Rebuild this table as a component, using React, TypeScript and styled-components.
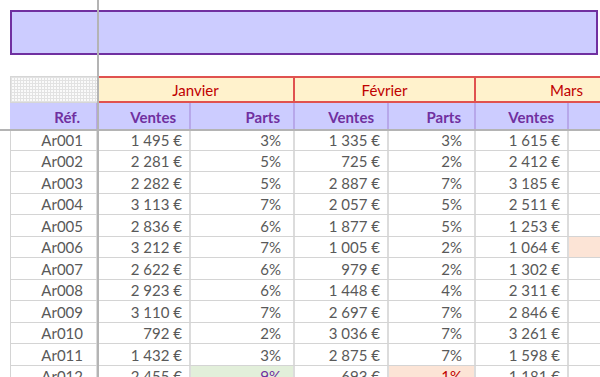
import styled, { createGlobalStyle } from "styled-components";

type Tone = "plain" | "good" | "bad" | "warn";

type Row = {
  ref: string;
  cells: [string, string, string, string, string, string];
  tones?: Partial<Record<number, Tone>>;
};

const COLS = "88px 93px 104px 94px 87px 93px 90px";

const rows: Row[] = [
  { ref: "Ar001", cells: ["1 495 €", "3%", "1 335 €", "3%", "1 615 €", ""] },
  { ref: "Ar002", cells: ["2 281 €", "5%", "725 €", "2%", "2 412 €", ""] },
  { ref: "Ar003", cells: ["2 282 €", "5%", "2 887 €", "7%", "3 185 €", ""] },
  { ref: "Ar004", cells: ["3 113 €", "7%", "2 057 €", "5%", "2 511 €", ""] },
  { ref: "Ar005", cells: ["2 836 €", "6%", "1 877 €", "5%", "1 253 €", ""] },
  {
    ref: "Ar006",
    cells: ["3 212 €", "7%", "1 005 €", "2%", "1 064 €", ""],
    tones: { 5: "warn" },
  },
  { ref: "Ar007", cells: ["2 622 €", "6%", "979 €", "2%", "1 302 €", ""] },
  { ref: "Ar008", cells: ["2 923 €", "6%", "1 448 €", "4%", "2 311 €", ""] },
  { ref: "Ar009", cells: ["3 110 €", "7%", "2 697 €", "7%", "2 846 €", ""] },
  { ref: "Ar010", cells: ["792 €", "2%", "3 036 €", "7%", "3 261 €", ""] },
  { ref: "Ar011", cells: ["1 432 €", "3%", "2 875 €", "7%", "1 598 €", ""] },
  {
    ref: "Ar012",
    cells: ["2 455 €", "9%", "693 €", "1%", "1 181 €", ""],
    tones: { 1: "good", 3: "bad" },
  },
];

// espace insécable comme dans Excel
const nb = (s: string) => s.replace(/ /g, "\u00a0");

const App = () => {
  return (
    <>
      <GlobalStyle />
      <Sheet>
        <TitleBar />
        <Table>
          <MonthRow>
            <CornerCell />
            <MonthCell>Janvier</MonthCell>
            <MonthCell>Février</MonthCell>
            <MonthCell>Mars</MonthCell>
          </MonthRow>

          <HeadRow>
            <HeadCell $pad={16}>Réf.</HeadCell>
            <HeadCell>Ventes</HeadCell>
            <HeadCell>Parts</HeadCell>
            <HeadCell>Ventes</HeadCell>
            <HeadCell>Parts</HeadCell>
            <HeadCell>Ventes</HeadCell>
            <HeadCell />
          </HeadRow>

          {rows.map((row) => (
            <DataRow key={row.ref}>
              <Cell $pad={13}>{row.ref}</Cell>
              {row.cells.map((value, i) => (
                <Cell
                  key={i}
                  $pad={i % 2 === 0 ? 7 : 12}
                  $tone={row.tones?.[i] ?? "plain"}
                >
                  {nb(value)}
                </Cell>
              ))}
            </DataRow>
          ))}
        </Table>

        {/* volets figés */}
        <FreezeV />
        <FreezeH />
      </Sheet>
    </>
  );
};

export default App;

const GlobalStyle = createGlobalStyle`
  html, body {
    margin: 0;
    padding: 0;
    background: #ffffff;
  }
  body {
    font-family: Lato, "Open Sans", "Liberation Sans", sans-serif;
  }
`;

const Sheet = styled.div`
  position: relative;
  width: 600px;
  height: 377px;
  overflow: hidden;
  background: #ffffff;
  padding: 10px 0 0 10px;
  box-sizing: border-box;
`;

const TitleBar = styled.div`
  width: 588px;
  height: 45px;
  box-sizing: border-box;
  background: #ccccff;
  border: 2px solid #7030a0;
`;

const Table = styled.div`
  margin-top: 21px;
  display: flex;
  flex-direction: column;
  width: 649px;
`;

const MonthRow = styled.div`
  display: grid;
  grid-template-columns: 88px 197px 181px 183px;
  height: 27px;
`;

const CornerCell = styled.div`
  box-sizing: border-box;
  border: 1px solid #d6d6d6;
  border-right: none;
  background-color: #fafafa;
  background-image: repeating-linear-gradient(
      0deg,
      #e2e2e2 0 1px,
      transparent 1px 3px
    ),
    repeating-linear-gradient(90deg, #e2e2e2 0 1px, transparent 1px 3px);
`;

const MonthCell = styled.div`
  box-sizing: border-box;
  display: flex;
  align-items: center;
  justify-content: center;
  padding-top: 1px;
  background: #fff2cc;
  border-top: 2px solid #e0524f;
  border-bottom: 2px solid #e0524f;
  border-right: 2px solid #e0524f;
  color: #c00000;
  font-size: 15px;
`;

const HeadRow = styled.div`
  display: grid;
  grid-template-columns: ${COLS};
  height: 26px;
  background: #ccccff;
`;

const HeadCell = styled.div<{ $pad?: number }>`
  box-sizing: border-box;
  display: flex;
  align-items: center;
  justify-content: flex-end;
  padding-top: 2px;
  padding-right: ${(p) => p.$pad ?? 13}px;
  border-right: 2px solid #b7a8ea;
  color: #7030a0;
  font-weight: 700;
  font-size: 15px;
`;

const DataRow = styled.div`
  display: grid;
  grid-template-columns: ${COLS};
  height: 21.5px;
  box-sizing: border-box;
  border-bottom: 1px solid #d4d4d4;
`;

const toneBg: Record<Tone, string> = {
  plain: "transparent",
  good: "#e2efda",
  bad: "#fce4d6",
  warn: "#fce4d6",
};

const toneFg: Record<Tone, string> = {
  plain: "#595959",
  good: "#7030a0",
  bad: "#c00000",
  warn: "#595959",
};

const Cell = styled.div<{ $pad?: number; $tone?: Tone }>`
  box-sizing: border-box;
  display: flex;
  align-items: center;
  justify-content: flex-end;
  padding-top: 1px;
  padding-right: ${(p) => p.$pad ?? 8}px;
  border-right: 2px solid #dcdcdc;
  background: ${(p) => toneBg[p.$tone ?? "plain"]};
  color: ${(p) => toneFg[p.$tone ?? "plain"]};
  font-size: 15px;
  white-space: nowrap;
  &:first-child {
    border-left: 1px solid #d4d4d4;
  }
`;

const FreezeV = styled.div`
  position: absolute;
  top: 0;
  left: 96.5px;
  width: 2px;
  height: 100%;
  background: #b4b4b4;
`;

const FreezeH = styled.div`
  position: absolute;
  top: 129px;
  left: 0;
  width: 100%;
  height: 2px;
  background: #b4b4b4;
`;
